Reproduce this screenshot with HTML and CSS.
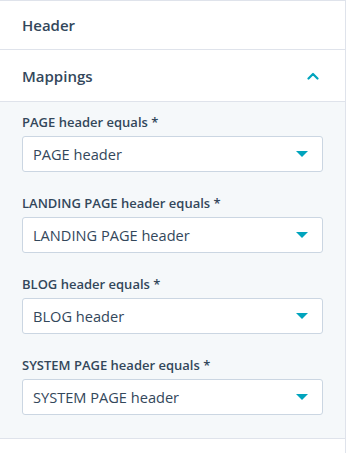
FILE: index.html
```html
<!DOCTYPE html>
<html lang="en">
<head>
    <meta charset="UTF-8">
    <meta name="viewport" content="width=device-width, initial-scale=1.0">
    <title>Header mappings</title>
    <link rel="stylesheet" href="styles.css">
</head>
<body>
<div class="panel">
    <div class="row">
        <span class="row-title">Header</span>
    </div>
    <div class="row row-mappings">
        <span class="row-title">Mappings</span>
        <svg class="chevron" width="12" height="8" viewBox="0 0 12 8">
            <path d="M1.5 6.5 L6 2 L10.5 6.5" fill="none" stroke="#00a4bd" stroke-width="2.2" stroke-linecap="round" stroke-linejoin="round"/>
        </svg>
    </div>
    <div class="fields">
        <div class="field">
            <label class="field-label">PAGE header equals *</label>
            <div class="select">
                <span>PAGE header</span>
                <i class="caret"></i>
            </div>
        </div>
        <div class="field">
            <label class="field-label">LANDING PAGE header equals *</label>
            <div class="select">
                <span>LANDING PAGE header</span>
                <i class="caret"></i>
            </div>
        </div>
        <div class="field">
            <label class="field-label">BLOG header equals *</label>
            <div class="select">
                <span>BLOG header</span>
                <i class="caret"></i>
            </div>
        </div>
        <div class="field">
            <label class="field-label">SYSTEM PAGE header equals *</label>
            <div class="select">
                <span>SYSTEM PAGE header</span>
                <i class="caret"></i>
            </div>
        </div>
    </div>
</div>
</body>
</html>
```

FILE: styles.css
```css
body {
    margin: 0;
    background: #fff;
    font-family: "Open Sans", "Liberation Sans", sans-serif;
    color: #33475b;
}
.panel {
    width: 345px;
    min-height: 453px;
    border-top: 1px solid #dfe3eb;
    border-right: 1px solid #dfe3eb;
}
.row {
    display: flex;
    align-items: center;
    justify-content: space-between;
    height: 48px;
    padding: 0 26px 0 22px;
    border-bottom: 1px solid #dfe3eb;
}
.row-mappings {
    height: 51px;
}
.row-title {
    font-size: 15px;
    font-weight: 600;
}
.chevron {
    display: block;
}
.fields {
    background: #f5f8fa;
    padding: 12px 22px 23px;
    border-bottom: 1px solid #dfe3eb;
}
.field {
    margin-bottom: 23px;
}
.field:last-child {
    margin-bottom: 0;
}
.field-label {
    display: block;
    font-size: 13px;
    font-weight: 600;
    line-height: 16px;
    margin-bottom: 6px;
}
.select {
    display: flex;
    align-items: center;
    justify-content: space-between;
    height: 34px;
    padding: 0 14px 0 10px;
    background: #fff;
    border: 1px solid #cbd6e2;
    border-radius: 3px;
    font-size: 14.6px;
}
.caret {
    width: 0;
    height: 0;
    border-left: 6px solid transparent;
    border-right: 6px solid transparent;
    border-top: 6px solid #00a4bd;
}
```
